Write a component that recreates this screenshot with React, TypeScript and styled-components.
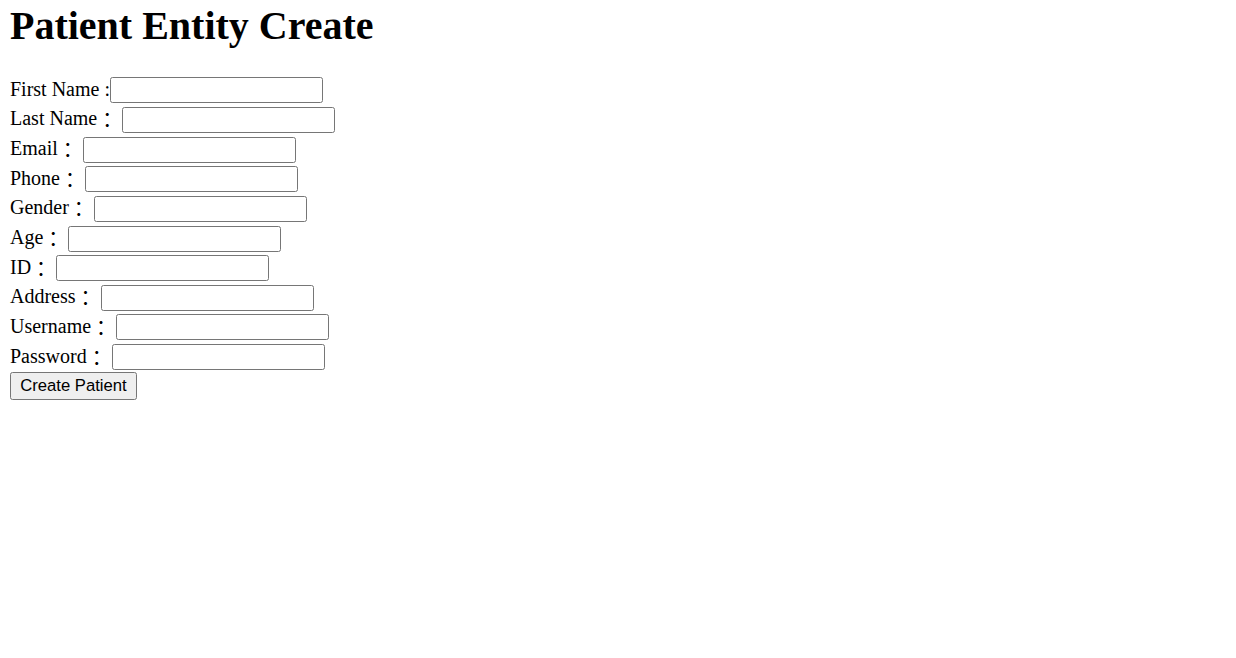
import styled, { createGlobalStyle } from "styled-components";

const GlobalStyle = createGlobalStyle`
  html, body {
    margin: 0;
    padding: 0;
    background: #ffffff;
  }
`;

interface Field {
  label: string;
  name: string;
  type: string;
  wide?: boolean;
}

const fields: Field[] = [
  { label: "First Name", name: "firstName", type: "text", wide: false },
  { label: "Last Name", name: "lastName", type: "text", wide: true },
  { label: "Email", name: "email", type: "text", wide: true },
  { label: "Phone", name: "phone", type: "text", wide: true },
  { label: "Gender", name: "gender", type: "text", wide: true },
  { label: "Age", name: "age", type: "text", wide: true },
  { label: "ID", name: "id", type: "text", wide: true },
  { label: "Address", name: "address", type: "text", wide: true },
  { label: "Username", name: "username", type: "text", wide: true },
  { label: "Password", name: "password", type: "password", wide: true },
];

export default function App() {
  return (
    <>
      <GlobalStyle />
      <StyledPage>
        <StyledTitle>Patient Entity Create</StyledTitle>
        <StyledForm onSubmit={(event) => event.preventDefault()}>
          {fields.map((field) => (
            <StyledRow key={field.name}>
              <StyledLabel htmlFor={field.name}>
                {field.wide ? (
                  <>
                    {field.label}
                    <StyledWideColon>：</StyledWideColon>{" "}
                  </>
                ) : (
                  `${field.label} :`
                )}
              </StyledLabel>
              <StyledInput id={field.name} name={field.name} type={field.type} />
            </StyledRow>
          ))}
          <StyledButton type="submit">Create Patient</StyledButton>
        </StyledForm>
      </StyledPage>
    </>
  );
}

const StyledPage = styled.main`
  padding: 2.6px 10px 0;
  font-family: "Liberation Serif", "Noto Sans CJK JP", serif;
  color: #000000;
`;

const StyledTitle = styled.h1`
  margin: 0 0 26.8px;
  font-size: 40px;
  line-height: 46px;
  font-weight: bold;
`;

const StyledForm = styled.form`
  display: flex;
  flex-direction: column;
  align-items: flex-start;
`;

const StyledRow = styled.div`
  display: flex;
  align-items: center;
  height: 29.66px;
`;

const StyledLabel = styled.label`
  padding-bottom: 2px;
  font-size: 20px;
  line-height: 23px;
  white-space: pre;
`;

const StyledWideColon = styled.span`
  font-family: "Noto Sans CJK JP", sans-serif;
  vertical-align: -3px;
  line-height: 1;
`;

const StyledInput = styled.input`
  box-sizing: border-box;
  width: 213px;
  height: 26px;
  margin: 0;
  padding: 1px 2px;
  border: 1px solid #767676;
  border-radius: 2.5px;
  background: #ffffff;
  font-family: "Liberation Sans", Arial, sans-serif;
  font-size: 16.67px;
`;

const StyledButton = styled.button`
  box-sizing: border-box;
  width: 127px;
  height: 28px;
  margin: 0;
  padding: 0;
  border: 1px solid #767676;
  border-radius: 2.5px;
  background: #efefef;
  color: #000000;
  font-family: "Liberation Sans", Arial, sans-serif;
  font-size: 16.67px;
`;
